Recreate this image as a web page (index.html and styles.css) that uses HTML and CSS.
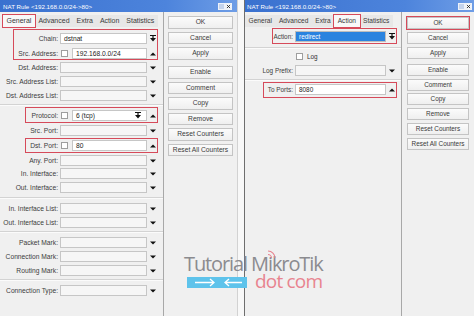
FILE: index.html
```html
<!DOCTYPE html>
<html lang="en">
<head>
    <meta charset="UTF-8">
    <meta name="viewport" content="width=device-width, initial-scale=1.0">
    <title>NAT Rule</title>
    <link rel="stylesheet" href="styles.css">
</head>
<body>

    <!-- icons used by the fields -->
    <svg class="icon-defs" width="0" height="0">
        <symbol id="i-down" viewBox="0 0 6 6"><path d="M0 1.5h6L3 4.5z"/></symbol>
        <symbol id="i-up" viewBox="0 0 6 6"><path d="M0 4.5h6L3 1.5z"/></symbol>
        <symbol id="i-combo" viewBox="0 0 6 7"><path d="M0 0h6v1.1H0zM2.4 1.1h1.2v1.9H2.4zM0 3h6L3 6.6z"/></symbol>
        <symbol id="i-close" viewBox="0 0 7 7"><path d="M1.3 1.3l4.4 4.4M5.7 1.3l-4.4 4.4" stroke="#1d1d1d" stroke-width="1.2" fill="none"/></symbol>
    </svg>

    <!-- window 1 : General -->
    <div class="win win-left">
        <div class="titlebar">
            <span class="title">NAT Rule &lt;192.168.0.0/24-&gt;80&gt;</span>
            <span class="ctl ctl-max"></span>
            <span class="ctl ctl-close"><svg><use href="#i-close"/></svg></span>
        </div>
        <div class="win-body">
            <div class="main">
                <div class="tabs">
                    <span class="tab active">General</span>
                    <span class="tab">Advanced</span>
                    <span class="tab">Extra</span>
                    <span class="tab">Action</span>
                    <span class="tab">Statistics</span>
                </div>
                <div class="form">
                    <div class="group hl hl-chain">
                        <div class="row loose">
                            <label>Chain:</label>
                            <div class="field"><span class="input filled">dstnat</span></div>
                            <span class="arrow"><svg class="combo"><use href="#i-combo"/></svg></span>
                        </div>
                        <div class="row">
                            <label>Src. Address:</label>
                            <div class="field"><span class="check"></span><span class="input filled">192.168.0.0/24</span></div>
                            <span class="arrow"><svg><use href="#i-up"/></svg></span>
                        </div>
                    </div>
                    <div class="row">
                        <label>Dst. Address:</label>
                        <div class="field"><span class="input"></span></div>
                        <span class="arrow"><svg><use href="#i-down"/></svg></span>
                    </div>
                    <div class="row">
                        <label>Src. Address List:</label>
                        <div class="field"><span class="input"></span></div>
                        <span class="arrow"><svg><use href="#i-down"/></svg></span>
                    </div>
                    <div class="row">
                        <label>Dst. Address List:</label>
                        <div class="field"><span class="input"></span></div>
                        <span class="arrow"><svg><use href="#i-down"/></svg></span>
                    </div>

                    <div class="sep"></div>

                    <div class="row loose hl hl-proto">
                        <label>Protocol:</label>
                        <div class="field"><span class="check"></span><span class="input filled">6 (tcp)<svg class="combo in-icon"><use href="#i-combo"/></svg></span></div>
                        <span class="arrow"><svg><use href="#i-up"/></svg></span>
                    </div>
                    <div class="row loose">
                        <label>Src. Port:</label>
                        <div class="field"><span class="input"></span></div>
                        <span class="arrow"><svg><use href="#i-down"/></svg></span>
                    </div>
                    <div class="row loose hl hl-port">
                        <label>Dst. Port:</label>
                        <div class="field"><span class="check"></span><span class="input filled">80</span></div>
                        <span class="arrow"><svg><use href="#i-up"/></svg></span>
                    </div>
                    <div class="row tight">
                        <label>Any. Port:</label>
                        <div class="field"><span class="input"></span></div>
                        <span class="arrow"><svg><use href="#i-down"/></svg></span>
                    </div>
                    <div class="row">
                        <label>In. Interface:</label>
                        <div class="field"><span class="input"></span></div>
                        <span class="arrow"><svg><use href="#i-down"/></svg></span>
                    </div>
                    <div class="row loose">
                        <label>Out. Interface:</label>
                        <div class="field"><span class="input"></span></div>
                        <span class="arrow"><svg><use href="#i-down"/></svg></span>
                    </div>

                    <div class="sep"></div>

                    <div class="row">
                        <label>In. Interface List:</label>
                        <div class="field"><span class="input"></span></div>
                        <span class="arrow"><svg><use href="#i-down"/></svg></span>
                    </div>
                    <div class="row">
                        <label>Out. Interface List:</label>
                        <div class="field"><span class="input"></span></div>
                        <span class="arrow"><svg><use href="#i-down"/></svg></span>
                    </div>

                    <div class="sep"></div>

                    <div class="row">
                        <label>Packet Mark:</label>
                        <div class="field"><span class="input"></span></div>
                        <span class="arrow"><svg><use href="#i-down"/></svg></span>
                    </div>
                    <div class="row">
                        <label>Connection Mark:</label>
                        <div class="field"><span class="input"></span></div>
                        <span class="arrow"><svg><use href="#i-down"/></svg></span>
                    </div>
                    <div class="row">
                        <label>Routing Mark:</label>
                        <div class="field"><span class="input"></span></div>
                        <span class="arrow"><svg><use href="#i-down"/></svg></span>
                    </div>

                    <div class="sep"></div>

                    <div class="row">
                        <label>Connection Type:</label>
                        <div class="field"><span class="input"></span></div>
                        <span class="arrow"><svg><use href="#i-down"/></svg></span>
                    </div>
                </div>
            </div>
            <div class="side">
                <span class="btn">OK</span>
                <span class="btn">Cancel</span>
                <span class="btn">Apply</span>
                <span class="btn btn-sep">Enable</span>
                <span class="btn">Comment</span>
                <span class="btn">Copy</span>
                <span class="btn">Remove</span>
                <span class="btn">Reset Counters</span>
                <span class="btn">Reset All Counters</span>
            </div>
        </div>
    </div>

    <!-- window 2 : Action -->
    <div class="win win-right">
        <div class="titlebar">
            <span class="title">NAT Rule &lt;192.168.0.0/24-&gt;80&gt;</span>
            <span class="ctl ctl-max"></span>
            <span class="ctl ctl-close"><svg><use href="#i-close"/></svg></span>
        </div>
        <div class="win-body">
            <div class="main">
                <div class="tabs">
                    <span class="tab">General</span>
                    <span class="tab">Advanced</span>
                    <span class="tab">Extra</span>
                    <span class="tab active">Action</span>
                    <span class="tab">Statistics</span>
                </div>
                <div class="form">
                    <div class="row row-action hl hl-action">
                        <label>Action:</label>
                        <div class="field"><span class="input selected">redirect</span></div>
                        <span class="arrow"><svg class="combo"><use href="#i-combo"/></svg></span>
                    </div>

                    <div class="sep"></div>

                    <div class="row row-check">
                        <label></label>
                        <div class="field"><span class="check"></span><span class="check-text">Log</span></div>
                    </div>
                    <div class="row">
                        <label>Log Prefix:</label>
                        <div class="field"><span class="input"></span></div>
                        <span class="arrow"><svg><use href="#i-down"/></svg></span>
                    </div>

                    <div class="sep"></div>

                    <div class="row hl hl-ports">
                        <label>To Ports:</label>
                        <div class="field"><span class="input filled">8080</span></div>
                        <span class="arrow"><svg><use href="#i-up"/></svg></span>
                    </div>
                </div>
            </div>
            <div class="side">
                <span class="btn marked">OK</span>
                <span class="btn">Cancel</span>
                <span class="btn">Apply</span>
                <span class="btn btn-sep">Enable</span>
                <span class="btn">Comment</span>
                <span class="btn">Copy</span>
                <span class="btn">Remove</span>
                <span class="btn">Reset Counters</span>
                <span class="btn">Reset All Counters</span>
            </div>
        </div>
    </div>

    <!-- watermark over both windows -->
    <div class="watermark">
        <div class="wm-top">Tutorial MikroTik</div>
        <div class="wm-bottom">
            <span class="wm-bar">
                <svg width="60" height="11" viewBox="0 0 60 11">
                    <path d="M8 5.5h19M23 2l4 3.5-4 3.5M55 5.5H38M42 2l-4 3.5 4 3.5" stroke="#fff" stroke-width="1.3" fill="none"/>
                </svg>
            </span>
            <span class="wm-dot">dot com</span>
        </div>
        <svg class="wm-wifi" width="10" height="9" viewBox="0 0 10 9">
            <path d="M1 4.5A3.5 3.5 0 0 1 4.5 8M1 1a7 7 0 0 1 7 7" stroke="#e7838f" stroke-width="1.1" fill="none"/>
        </svg>
    </div>

</body>
</html>
```

FILE: styles.css
```css
/* reset */
* {
    margin: 0;
    padding: 0;
    box-sizing: border-box;
}

body {
    position: relative;
    display: flex;
    width: 474px;
    height: 316px;
    overflow: hidden;
    background: #f8f8f8;
    font-family: "Liberation Sans", Arial, sans-serif;
    color: #333;
}

.icon-defs {
    position: absolute;
    width: 0;
    height: 0;
}

/* windows */
.win {
    display: flex;
    flex-direction: column;
    height: 316px;
    background: #f0f0f0;
}

.win-left {
    width: 238px;
    font-size: 6.7px;
    border-right: 1px solid #d2d2d2;
}

.win-right {
    width: 230px;
    margin-left: 6px;
    font-size: 6.4px;
    border-left: 1px solid #6e6e6e;
}

/* title bar */
.titlebar {
    flex: none;
    display: flex;
    align-items: center;
    height: 12px;
    padding: 0 5px 0 3px;
    background: linear-gradient(90deg, #3a71cf, #4d84dc 70%, #6e9de6);
    color: #fff;
    font-size: 6.2px;
}

.win-right .titlebar {
    padding: 0 2px 0 2px;
}

.title {
    flex: 1;
    white-space: nowrap;
}

.ctl {
    width: 7px;
    height: 7px;
    border: 1px solid #eef2f9;
    background: #c4d3ec;
}

.ctl-close {
    background: #f3f5f9;
}

.ctl-close svg {
    display: block;
    width: 5px;
    height: 5px;
}

.win-body {
    flex: 1;
    display: flex;
}

.main {
    border-right: 1px solid #a8a8a8;
}

.win-left .main {
    width: 164px;
}

.win-right .main {
    width: 157px;
}

/* tabs */
.tabs {
    display: flex;
    width: max-content;
    height: 12px;
    margin: 3px 0 0 3px;
    background: #e7e7e7;
    font-size: 7px;
}

.win-right .tabs {
    margin-left: 0;
    font-size: 6.6px;
}

.tab {
    padding: 0 3.5px;
    line-height: 12px;
    white-space: nowrap;
    color: #3a3a3a;
}

.tab.active {
    background: #f8f8f8;
    outline: 1.5px solid #d64a5a;
    outline-offset: -0.5px;
}

/* form rows */
.form {
    display: flex;
    flex-direction: column;
    padding-top: 6px;
}

.win-right .form {
    padding-top: 4px;
}

.group {
    display: flex;
    flex-direction: column;
    margin-bottom: 3px;
}

.row {
    display: flex;
    align-items: center;
    height: 11px;
    margin-bottom: 3px;
}

.group .row:last-child {
    margin-bottom: 0;
}

.row.loose {
    margin-bottom: 4px;
}

.row.tight {
    margin-bottom: 2px;
}

.row label {
    flex: none;
    width: 60px;
    padding-right: 2px;
    text-align: right;
    white-space: nowrap;
    color: #3c3c3c;
}

.win-right .row label {
    width: 50px;
}

.field {
    flex: none;
    display: flex;
    align-items: center;
    width: 87px;
    height: 11px;
}

.win-right .field {
    width: 91px;
}

.input {
    flex: 1;
    display: flex;
    align-items: center;
    height: 11px;
    padding: 0 3px;
    border: 1px solid #c6c6c6;
    background: #f6f6f6;
    white-space: nowrap;
    overflow: hidden;
    color: #222;
}

.input.filled {
    background: #fff;
}

.input.selected {
    background: #2a83df;
    border-color: #bdbdbd;
    color: #fff;
}

.in-icon {
    margin-left: auto;
    margin-right: 2px;
}

.check {
    flex: none;
    width: 7px;
    height: 7px;
    margin: 0 4px 0 1px;
    border: 1px solid #9e9e9e;
    background: #fff;
}

.check-text {
    color: #333;
}

.arrow {
    flex: none;
    display: flex;
    justify-content: center;
    align-items: center;
    width: 11px;
}

.win-right .arrow {
    width: 12px;
}

.arrow svg,
.in-icon {
    width: 6px;
    height: 6px;
    fill: #111;
}

svg.combo {
    height: 7px;
}

.sep {
    height: 2px;
    margin-bottom: 4px;
    border-top: 1px solid #d3d3d3;
    border-bottom: 1px solid #fbfbfb;
}

.win-right .row-action {
    margin-bottom: 5px;
}

.win-right .row-check {
    height: 9px;
    margin-bottom: 4px;
}

.win-right .sep {
    margin-bottom: 3px;
}

/* red marks drawn over the screenshot */
.hl {
    position: relative;
}

.hl::after {
    content: "";
    position: absolute;
    border: 1.5px solid #d64a5a;
    pointer-events: none;
}

.hl-chain::after {
    top: -4px;
    bottom: -1px;
    left: 13px;
    right: 5px;
}

.hl-proto::after {
    top: -3px;
    bottom: -2px;
    left: 25px;
    right: 5px;
}

.hl-port::after {
    top: -2px;
    bottom: -2px;
    left: 25px;
    right: 5px;
}

.hl-action::after {
    top: -3px;
    bottom: -2px;
    left: 27px;
    right: 4px;
}

.hl-ports::after {
    top: -2px;
    bottom: -3px;
    left: 18px;
    right: 4px;
}

/* buttons column */
.side {
    flex: 1;
    display: flex;
    flex-direction: column;
    padding: 4px 4px 0 4px;
}

.win-right .side {
    padding: 5px 5px 0 5px;
}

.btn {
    height: 12.5px;
    margin-bottom: 3px;
    border: 1px solid #c4c4c4;
    background: linear-gradient(#fbfbfb, #efefef);
    text-align: center;
    line-height: 10.5px;
    white-space: nowrap;
    color: #3a3a3a;
}

.btn-sep {
    margin-top: 3.5px;
}

.win-right .btn {
    height: 12px;
    margin-bottom: 2.8px;
    line-height: 10px;
}

.win-right .btn-sep {
    margin-top: 2.5px;
}

.btn.marked {
    outline: 1.5px solid #d64a5a;
    outline-offset: 0.5px;
}

/* watermark */
.watermark {
    position: absolute;
    left: 184px;
    top: 255px;
    font-family: "Open Sans", sans-serif;
}

.wm-top {
    height: 18px;
    font-size: 20px;
    line-height: 18px;
    letter-spacing: -1.1px;
    white-space: nowrap;
    color: #8b8b8f;
}

.wm-bottom {
    display: flex;
}

.wm-bar {
    display: block;
    width: 60px;
    height: 11px;
    margin: 4px 0 0 3px;
    background: #5ec3eb;
}

.wm-bar svg {
    display: block;
}

.wm-dot {
    margin-left: 8px;
    font-size: 19px;
    line-height: 17px;
    letter-spacing: -0.8px;
    white-space: nowrap;
    color: #e8848f;
}

.wm-wifi {
    position: absolute;
    left: 83px;
    top: -5px;
}
```
